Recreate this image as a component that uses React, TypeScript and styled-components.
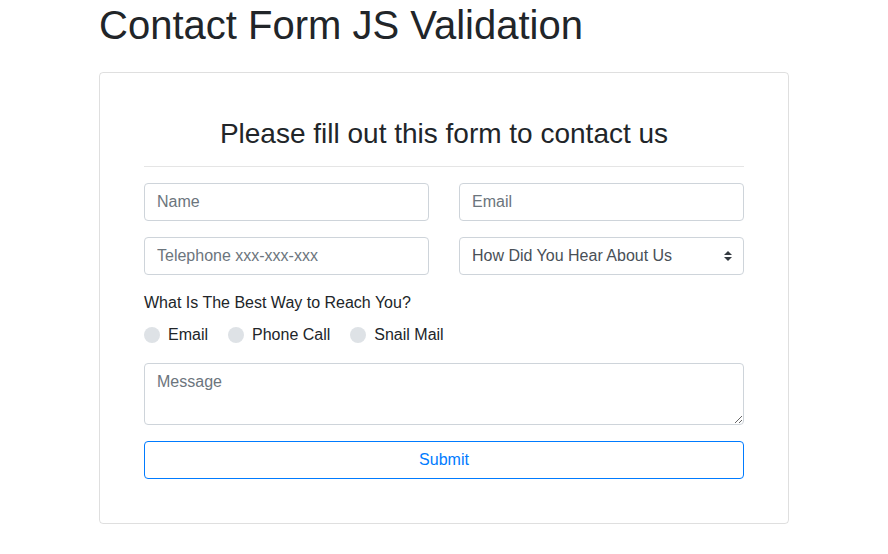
import React from 'react'
import styled, { createGlobalStyle } from 'styled-components'

const textDark = '#212529'
const inputText = '#495057'
const muted = '#6c757d'
const borderGrey = '#ced4da'
const primary = '#007bff'

const GlobalStyle = createGlobalStyle`
  * {
    box-sizing: border-box;
  }
  body {
    margin: 0;
    background: #fff;
    color: ${textDark};
    font-family: 'Liberation Sans', Arial, sans-serif;
    font-size: 16px;
    line-height: 1.5;
  }
`

const Container = styled.div`
  width: 690px;
  margin: 0 auto;
`

const PageTitle = styled.h1`
  margin: 1px 0 0;
  font-size: 40px;
  font-weight: 400;
  line-height: 1.2;
`

const Card = styled.div`
  margin-top: 23px;
  border: 1px solid rgba(0, 0, 0, 0.125);
  border-radius: 4px;
  padding: 44px;
`

const FormTitle = styled.h3`
  margin: 0;
  font-size: 28px;
  font-weight: 400;
  line-height: 1.2;
  text-align: center;
`

const Divider = styled.hr`
  margin: 15px 0 16px;
  border: 0;
  border-top: 1px solid rgba(0, 0, 0, 0.1);
`

const Row = styled.div`
  display: grid;
  grid-template-columns: 1fr 1fr;
  column-gap: 30px;
  margin-bottom: 16px;
`

const fieldBase = `
  display: block;
  width: 100%;
  border: 1px solid ${borderGrey};
  border-radius: 4px;
  background: #fff;
  color: ${inputText};
  font-family: 'Liberation Sans', Arial, sans-serif;
  font-size: 16px;
  line-height: 1.5;
  padding: 6px 12px;
  &::placeholder {
    color: ${muted};
    opacity: 1;
  }
`

const Input = styled.input`
  ${fieldBase};
  height: 38px;
`

const SelectWrap = styled.div`
  position: relative;
  svg {
    position: absolute;
    right: 12px;
    top: 14px;
    pointer-events: none;
  }
`

const Select = styled.select`
  ${fieldBase};
  height: 38px;
  padding-right: 28px;
  appearance: none;
`

const Question = styled.label`
  display: block;
  margin-bottom: 8px;
`

const RadioGroup = styled.div`
  display: flex;
  gap: 20px;
  margin-bottom: 16px;
`

const RadioLabel = styled.label`
  display: inline-flex;
  align-items: center;
  gap: 8px;
  height: 24px;
`

const RadioDot = styled.span`
  width: 16px;
  height: 16px;
  border-radius: 50%;
  background: #dee2e6;
`

const Textarea = styled.textarea`
  ${fieldBase};
  height: 62px;
  margin-bottom: 16px;
`

const SubmitButton = styled.button`
  display: block;
  width: 100%;
  height: 38px;
  border: 1px solid ${primary};
  border-radius: 4px;
  background: transparent;
  color: ${primary};
  font-family: 'Liberation Sans', Arial, sans-serif;
  font-size: 16px;
  line-height: 1.5;
`

const SortArrows = () => (
  <svg width="8" height="10" viewBox="0 0 4 5">
    <path fill="#343a40" d="M2 0L0 2h4zm0 5L0 3h4z" />
  </svg>
)

const Radio = ({ label }: { label: string }) => (
  <RadioLabel>
    <RadioDot />
    {label}
  </RadioLabel>
)

export default function App() {
  return (
    <>
      <GlobalStyle />
      <Container>
        <PageTitle>Contact Form JS Validation</PageTitle>
        <Card>
          <FormTitle>Please fill out this form to contact us</FormTitle>
          <Divider />
          <Row>
            <Input placeholder="Name" />
            <Input placeholder="Email" />
          </Row>
          <Row>
            <Input placeholder="Telephone xxx-xxx-xxx" />
            <SelectWrap>
              <Select defaultValue="">
                <option value="">How Did You Hear About Us</option>
              </Select>
              <SortArrows />
            </SelectWrap>
          </Row>
          <Question>What Is The Best Way to Reach You?</Question>
          <RadioGroup>
            <Radio label="Email" />
            <Radio label="Phone Call" />
            <Radio label="Snail Mail" />
          </RadioGroup>
          <Textarea placeholder="Message" />
          <SubmitButton>Submit</SubmitButton>
        </Card>
      </Container>
    </>
  )
}
